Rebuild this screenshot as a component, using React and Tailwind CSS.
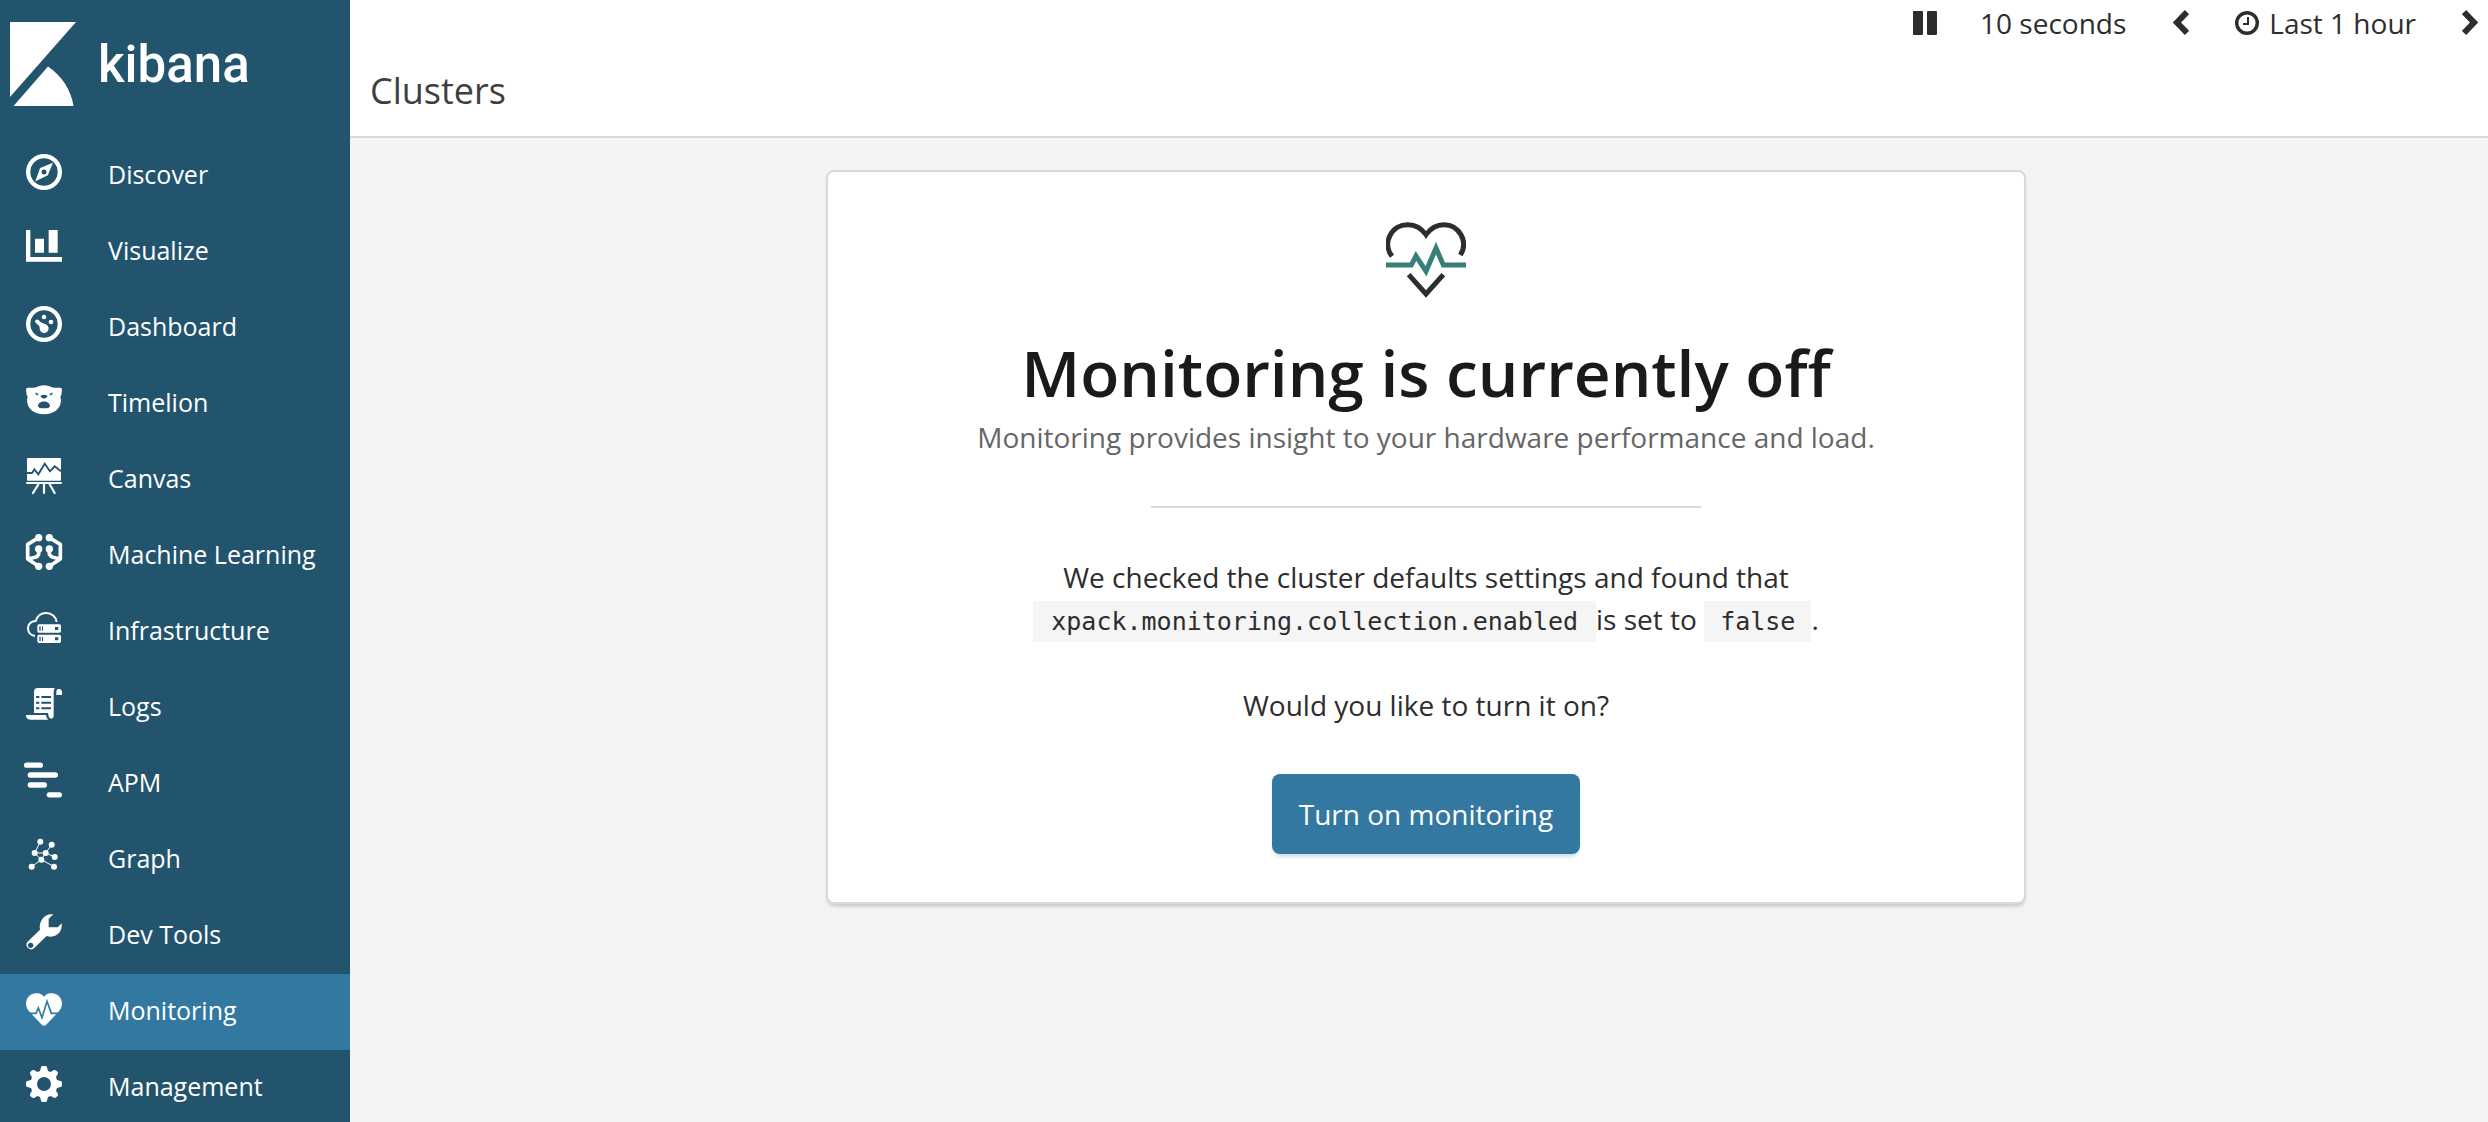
import React from "react";

const ring = <circle cx="54" cy="54" r="47.5" fill="none" stroke="currentColor" strokeWidth="13" />;

const icons = {
  discover: (
    <>
      {ring}
      <path fillRule="evenodd" d="M81 26 66 62Q65 64 63 65L28 82 41 45Q42 42 44 41ZM54 46.500a7.500 7.500 0 1 0 0 15a7.500 7.500 0 1 0 0-15Z" />
    </>
  ),
  visualize: <path d="M0 0H13V81H108V95H0ZM27 26H54V68H27ZM68 0H95V68H68Z" />,
  dashboard: (
    <>
      {ring}
      <circle cx="54" cy="33" r="7" />
      <circle cx="75" cy="48" r="7" />
      <path d="M29 42C33 38 38 41 42 47L56 54A13.500 13.500 0 1 1 41 66C41 60 38 58 32 53C27 50 26 45 29 42Z" />
    </>
  ),
  timelion: (
    <path
      fillRule="evenodd"
      d="M0 23Q0 17 6 17H24Q28 17 32 15Q42 10 54 10T76 15Q80 17 84 17H102Q108 17 108 23L106 40 103 43 105 54C105 80 84 97 54 97S3 80 3 54L5 43 2 40ZM28 31 38 37 36 40 30 38ZM80 31 70 37 72 40 78 38ZM44 41Q54 36 64 41Q66 45 54 50Q42 45 44 41ZM36 73C36 54 72 54 72 73Q70 79 62 79H46Q38 79 36 73Z"
    />
  ),
  canvas: (
    <>
      <rect x="3" y="0" width="102" height="68" rx="3" />
      <path d="M3 45H18L25 34 37 49 56 17 72 40 86 25 105 40" fill="none" className="stroke-[#22546e]" strokeWidth="5.500" />
      <path d="M3 75H105M54 78V105M37 79 21 105M71 79 86 105" fill="none" stroke="currentColor" strokeWidth="6.500" strokeLinecap="round" />
    </>
  ),
  ml: (
    <>
      <path
        d="M38 11 5 31V75L38 97M38 46V61L33 68 7 75M70 11 103 31V75L70 97M70 46V61L76 68 101 75"
        fill="none"
        stroke="currentColor"
        strokeWidth="11"
        strokeLinejoin="round"
      />
      <circle cx="38" cy="11" r="11" />
      <circle cx="70" cy="11" r="11" />
      <circle cx="38" cy="45" r="11" />
      <circle cx="70" cy="45" r="11" />
      <circle cx="38" cy="97" r="11" />
      <circle cx="70" cy="97" r="11" />
    </>
  ),
  infrastructure: (
    <>
      <path d="M27 78C15 77 6 68 6 55S16 33 29 33C34 18 46 9 60 9C77 9 90 20 92 36" fill="none" stroke="currentColor" strokeWidth="6" />
      <path
        fillRule="evenodd"
        d="M39 43H100Q105 43 105 48V63Q105 68 100 68H39Q34 68 34 63V48Q34 43 39 43ZM40 49V62H44V49ZM48 49V62H51V49ZM87 51H97V60H87Z"
      />
      <path
        fillRule="evenodd"
        d="M39 74H100Q105 74 105 79V94Q105 99 100 99H39Q34 99 34 94V79Q34 74 39 74ZM40 80V93H44V80ZM48 80V93H51V80ZM87 82H97V91H87Z"
      />
    </>
  ),
  logs: (
    <>
      <path
        fillRule="evenodd"
        d="M35 6H87Q83 10 83 17V88Q83 98 76 98Q69 98 68 91L66 81H24V18Q24 6 35 6ZM30 30V36H40V30ZM46 30V36H75V30ZM30 47V53H40V47ZM46 47V53H75V47ZM30 64V70H40V64ZM46 64V70H75V64Z"
      />
      <path d="M91 27V17Q91 9 99 9T108 17V27ZM0 87H60Q61 97 67 101H13Q0 101 0 87Z" />
    </>
  ),
  apm: (
    <path
      d="M2 9.500H43M13 39H88M13 69H55M70 98.500H100"
      fill="none"
      stroke="currentColor"
      strokeWidth="16"
      strokeLinecap="round"
    />
  ),
  graph: (
    <>
      <path d="M43 11 26 45H59L77 20M59 45 86 57M26 45 46 65 59 45M17 86 46 65 84 86" fill="none" stroke="currentColor" strokeWidth="3" />
      <circle cx="43" cy="11" r="9" />
      <circle cx="77" cy="20" r="9" />
      <circle cx="26" cy="45" r="9" />
      <circle cx="59" cy="45" r="9" />
      <circle cx="86" cy="57" r="9" />
      <circle cx="46" cy="65" r="9" />
      <circle cx="17" cy="86" r="9" />
      <circle cx="84" cy="86" r="9" />
    </>
  ),
  devtools: (
    <path
      fillRule="evenodd"
      d="M82 1 68 14V40H95L107 28C110 50 95 68 75 68C70 68 66 67 62 66L24 103A14 14 0 0 1 4 84L42 47C37 22 56-3 82 1ZM14 86A8 8 0 1 0 14 102A8 8 0 1 0 14 86Z"
    />
  ),
  monitoring: (
    <>
      <path d="M54 20C46 11 38 10 31 10C13 10 0 24 0 41C0 52 5 60 12 67L46 103Q54 112 62 103L96 67C103 60 108 52 108 41C108 24 95 10 77 10C70 10 62 11 54 20Z" />
      <path d="M9 70H30L37 54 48 83 63 34 76 70H99" fill="none" className="stroke-[#3278a1]" strokeWidth="5" />
    </>
  ),
  management: (
    <path
      fillRule="evenodd"
      d="M45 4Q46 0 50 0H58Q62 0 63 4L66 15 74 18 84 12Q88 11 91 14L95 18Q97 21 95 24L90 34 93 42 104 45Q108 46 108 50V58Q108 62 104 63L93 66 90 74 96 84Q97 88 94 91L90 94Q87 97 84 95L74 90 66 93 63 104Q62 108 58 108H50Q46 108 45 104L42 93 34 90 24 96Q20 97 17 94L13 90Q11 87 12 84L18 74 15 66 4 63Q0 62 0 58V50Q0 46 4 45L15 42 18 34 12 24Q11 20 14 17L18 13Q21 11 24 12L34 18 42 15ZM54 33A21 21 0 1 0 54 75A21 21 0 1 0 54 33Z"
    />
  ),
};

const navItems = [
  ["Discover", "discover"],
  ["Visualize", "visualize"],
  ["Dashboard", "dashboard"],
  ["Timelion", "timelion"],
  ["Canvas", "canvas"],
  ["Machine Learning", "ml"],
  ["Infrastructure", "infrastructure"],
  ["Logs", "logs"],
  ["APM", "apm"],
  ["Graph", "graph"],
  ["Dev Tools", "devtools"],
  ["Monitoring", "monitoring"],
  ["Management", "management"],
];

function Sidebar() {
  return (
    <nav aria-label="Main" className="w-[350px] shrink-0 bg-[#22546e] text-white">
      <a href="#home" className="flex h-[138px] items-start gap-[22px] pl-2.5 pt-[22px]">
        <svg viewBox="0 0 66 84" className="h-[84px] w-[66px]" fill="currentColor" aria-hidden="true">
          <path d="M0 0H66L0 75Z" />
          <path d="M38 44.500C52 54 61 68 63.500 84H3.500Z" />
        </svg>
        <span className="pt-[13px] font-['Roboto'] text-[51px] font-medium leading-[60px]">kibana</span>
      </a>
      <ul>
        {navItems.map(([label, icon]) => (
          <li key={icon}>
            <a
              href={"#" + icon}
              aria-current={icon === "monitoring" ? "page" : undefined}
              className={
                icon === "monitoring"
                  ? "flex h-[76px] items-start bg-[#3278a1] pl-[26px] pt-4"
                  : "flex h-[76px] items-start pl-[26px] pt-4"
              }
            >
              <svg viewBox="0 0 108 108" className="size-9 overflow-visible" fill="currentColor" aria-hidden="true">
                {icons[icon]}
              </svg>
              <span className="pl-[46px] pt-0.5 text-[25px] leading-9">{label}</span>
            </a>
          </li>
        ))}
      </ul>
    </nav>
  );
}

function Header() {
  return (
    <header className="border-b-2 border-[#d9d9d9] bg-white pb-5">
      <div className="flex h-[46px] items-center justify-end pr-2.5 text-[28px] leading-[46px] text-[#2d2d2d]">
        <button type="button" aria-label="Pause" className="mr-[43px]">
          <svg viewBox="0 0 24 24" className="size-6" fill="currentColor">
            <rect width="10" height="24" rx="1" />
            <rect x="14" width="10" height="24" rx="1" />
          </svg>
        </button>
        <button type="button" className="mr-[47px]">10 seconds</button>
        <button type="button" aria-label="Previous time range" className="mr-[46px]">
          <svg viewBox="0 0 16 28" className="h-7 w-4" fill="none" stroke="currentColor" strokeWidth="6">
            <path d="M14 3 4 13.500 14 24" />
          </svg>
        </button>
        <button type="button" className="mr-[46px] flex items-center gap-2.5">
          <svg viewBox="0 0 24 24" className="size-6" fill="none" stroke="currentColor">
            <circle cx="12" cy="12" r="10.300" strokeWidth="3.400" />
            <path d="M13 6V13H8" strokeWidth="2" />
          </svg>
          Last 1 hour
        </button>
        <button type="button" aria-label="Next time range">
          <svg viewBox="0 0 16 28" className="h-7 w-4" fill="none" stroke="currentColor" strokeWidth="6">
            <path d="M2 3 12 13.500 2 24" />
          </svg>
        </button>
      </div>
      <h1 className="pl-5 pt-5 text-[36px] leading-[50px] text-[#3f3f3f]">Clusters</h1>
    </header>
  );
}

function MonitoringCard() {
  return (
    <section className="mx-auto flex w-full max-w-[1200px] flex-col items-center rounded-lg border-2 border-[#d9d9d9] bg-white p-12 text-center text-[28px] leading-[42px] text-[#2d2d2d] shadow-[0_4px_4px_-2px_rgba(0,0,0,0.2)]">
      <svg viewBox="0 0 240 240" className="size-20" fill="none" strokeWidth="15" aria-hidden="true">
        <path stroke="#2d2d2d" d="M18 109A59 59 0 0 1 66 14C90 14 108 27 120 44C132 27 150 14 174 14A59 59 0 0 1 223 105" />
        <path stroke="#2d2d2d" d="M68 164 120 222 172 164" />
        <path stroke="#387f77" d="M0 135H76L90 108 120 154 150 84 172 135H240" />
      </svg>
      <h2 className="mt-[30px] text-[64px] font-semibold leading-[86px] text-[#1a1a1a]">Monitoring is currently off</h2>
      <p className="text-[#666]">Monitoring provides insight to your hardware performance and load.</p>
      <hr className="my-12 h-0.5 w-1/2 border-0 bg-[#d9d9d9]" />
      <p>
        We checked the cluster defaults settings and found that
        <br />
        <code className="bg-[#f5f5f5] px-[18px] py-1.5 font-['DejaVu_Sans_Mono'] text-[25px] leading-9">
          xpack.monitoring.collection.enabled
        </code>
        is set to <code className="bg-[#f5f5f5] px-4 py-1.5 font-['DejaVu_Sans_Mono'] text-[25px] leading-9">false</code>.
      </p>
      <p className="mt-11">Would you like to turn it on?</p>
      <button
        type="button"
        className="mt-12 h-20 rounded-lg bg-[#3278a1] px-[27px] text-white shadow-[0_4px_4px_-2px_rgba(50,120,161,0.3)]"
      >
        Turn on monitoring
      </button>
    </section>
  );
}

export default function App() {
  return (
    <div className="flex h-screen overflow-hidden bg-[#f4f4f4] font-['Open_Sans',sans-serif]">
      <Sidebar />
      <div className="min-w-0 flex-1">
        <Header />
        <main className="pl-[34px] pr-5 pt-8">
          <MonitoringCard />
        </main>
      </div>
    </div>
  );
}
